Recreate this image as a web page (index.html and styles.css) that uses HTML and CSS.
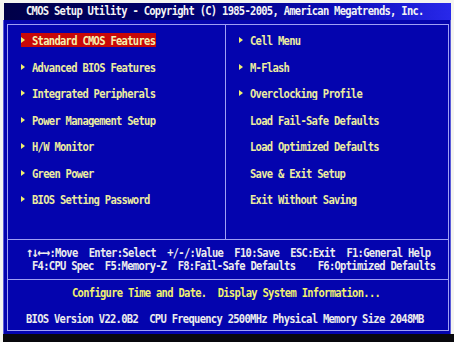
FILE: index.html
```html
<!DOCTYPE html>
<html>
<head>
<meta charset="utf-8">
<link rel="stylesheet" href="styles.css">
</head>
<body>
<div class="screen">
  <div class="title"><span class="txt">CMOS Setup Utility - Copyright (C) 1985-2005, American Megatrends, Inc.</span></div>
  <div class="panel">
    <div class="frame">
      <div class="menus">
        <ul class="col col-left">
          <li class="item"><span class="hl"><span class="arrow"></span><span class="txt">Standard CMOS Features</span></span></li>
          <li class="item"><span class="arrow"></span><span class="txt">Advanced BIOS Features</span></li>
          <li class="item"><span class="arrow"></span><span class="txt">Integrated Peripherals</span></li>
          <li class="item"><span class="arrow"></span><span class="txt">Power Management Setup</span></li>
          <li class="item"><span class="arrow"></span><span class="txt">H/W Monitor</span></li>
          <li class="item"><span class="arrow"></span><span class="txt">Green Power</span></li>
          <li class="item"><span class="arrow"></span><span class="txt">BIOS Setting Password</span></li>
        </ul>
        <ul class="col col-right">
          <li class="item"><span class="arrow"></span><span class="txt">Cell Menu</span></li>
          <li class="item"><span class="arrow"></span><span class="txt">M-Flash</span></li>
          <li class="item"><span class="arrow"></span><span class="txt">Overclocking Profile</span></li>
          <li class="item"><span class="arrow blank"></span><span class="txt">Load Fail-Safe Defaults</span></li>
          <li class="item"><span class="arrow blank"></span><span class="txt">Load Optimized Defaults</span></li>
          <li class="item"><span class="arrow blank"></span><span class="txt">Save &amp; Exit Setup</span></li>
          <li class="item"><span class="arrow blank"></span><span class="txt">Exit Without Saving</span></li>
        </ul>
      </div>
      <div class="help">
        <div class="line help-line1"><span class="txt"><span class="keys">↑↓←→</span>:Move  Enter:Select  +/-/:Value  F10:Save  ESC:Exit  F1:General Help</span></div>
        <div class="line help-line2"><span class="txt">F4:CPU Spec  F5:Memory-Z  F8:Fail-Safe Defaults    F6:Optimized Defaults</span></div>
      </div>
      <div class="info">
        <div class="line desc"><span class="txt">Configure Time and Date.  Display System Information...</span></div>
        <div class="line version"><span class="txt">BIOS Version V22.0B2  CPU Frequency 2500MHz Physical Memory Size 2048MB</span></div>
      </div>
    </div>
  </div>
</div>
<div class="bottom"></div>
</body>
</html>
```
FILE: styles.css
```css
* { box-sizing: border-box; }
html, body { margin: 0; padding: 0; }
body {
  width: 454px;
  height: 342px;
  overflow: hidden;
  background: #f4f4f0;
  font-family: "DejaVu Sans Mono", "Liberation Mono", monospace;
  font-weight: bold;
  font-size: 10.5px;
  letter-spacing: -0.72px;
}
.txt {
  display: inline-block;
  transform: scaleY(1.14);
}
.screen {
  margin: 3px 0 0 3px;
  width: 448px;
}
.title {
  height: 17px;
  margin-left: 1px;
  line-height: 17px;
  padding-left: 22px;
  color: #f4f4f4;
  white-space: pre;
  background: linear-gradient(to right, #000048 0%, #000070 40%, #0c0cb8 75%, #2828ea 100%);
}
.panel {
  height: 314px;
  background: #0404ae;
  border-left: 1px solid #5c5cd8;
  border-right: 1px solid #5c5cd8;
  padding: 4px 1px 3px 3px;
}
.frame {
  height: 307px;
  border: 1px solid #a0a0f4;
  display: flex;
  flex-direction: column;
}
.menus {
  display: flex;
  height: 215px;
  flex: none;
  border-bottom: 1px solid #a0a0f4;
}
.col {
  list-style: none;
  margin: 0;
  padding: 2px 0 0 13px;
  display: flex;
  flex-direction: column;
}
.col-left {
  width: 218px;
  border-right: 1px solid #a0a0f4;
}
.col-right {
  flex: 1;
}
.item {
  height: 26.5px;
  flex: none;
  display: flex;
  align-items: center;
  color: #ececa0;
  white-space: pre;
}
.hl {
  display: flex;
  align-items: center;
  height: 14px;
  background: #c80808;
  padding-right: 1px;
  color: #f4f0b0;
}
.arrow {
  width: 0;
  height: 0;
  border-left: 4px solid #f0f070;
  border-top: 3.5px solid transparent;
  border-bottom: 3.5px solid transparent;
  margin-right: 7px;
}
.arrow.blank {
  border-left-color: transparent;
}
.help {
  height: 40px;
  flex: none;
  border-bottom: 1px solid #a0a0f4;
  padding-top: 6.5px;
  color: #ececec;
}
.line {
  height: 13px;
  line-height: 13px;
  white-space: pre;
}
.keys {
  letter-spacing: -1.6px;
  font-size: 12px;
  padding-right: 1px;
}
.help-line1 { padding-left: 18px; }
.help-line2 { padding-left: 24px; }
.info {
  flex: 1;
  padding-top: 6.5px;
}
.desc {
  padding-left: 64px;
  color: #f0f070;
}
.version {
  margin-top: 13px;
  padding-left: 18px;
  color: #ececec;
}
.bottom {
  margin-left: 3px;
  height: 8px;
  background: #08080c;
}
```
